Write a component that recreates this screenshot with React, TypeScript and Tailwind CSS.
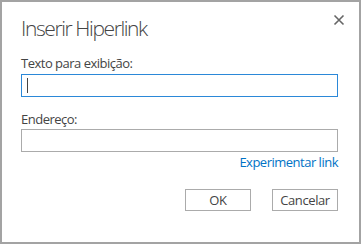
function Button({ label }: { label: string }) {
  return (
    <button
      type="button"
      className="flex h-[22px] w-[66px] items-center justify-center border border-[#ababab] bg-white text-[13px] leading-none tracking-[-0.4px] text-[#444]"
    >
      {label}
    </button>
  );
}

export default function App() {
  return (
    <div
      className="flex h-[244px] w-[361px] flex-col border-2 border-[#a3a3a3] bg-white text-[#444]"
      style={{ fontFamily: '"Open Sans", "Noto Sans", sans-serif' }}
    >
      <div className="flex items-start justify-between pl-[19px] pr-[14px] pt-[12px]">
        <h1 className="text-[21px] font-light leading-[28px] tracking-[-1.4px] text-[#444]">
          Inserir Hiperlink
        </h1>
        <button type="button" className="mt-[0px] text-[#666]" aria-label="Fechar">
          <svg width="12" height="12" viewBox="0 0 12 12">
            <path
              d="M1.5 1.5 L10.5 10.5 M10.5 1.5 L1.5 10.5"
              stroke="currentColor"
              strokeWidth="1.6"
            />
          </svg>
        </button>
      </div>

      <div className="flex flex-col pl-[19px] pr-[21px] pt-[13px]">
        <div className="text-[13px] leading-[17px] tracking-[-0.5px]">Texto para exibição:</div>
        <div className="mt-[2px] flex h-[23px] w-full items-center border border-[#2b88d8] px-[5px]">
          <div className="h-[15px] w-px bg-[#444]" />
        </div>

        <div className="mt-[14px] text-[13px] leading-[17px] tracking-[-0.5px]">Endereço:</div>
        <div className="mt-[1px] h-[23px] w-full border border-[#ababab]" />

        <div className="mt-[2px] flex justify-end">
          <a href="#" className="text-[13px] leading-[17px] tracking-[-0.5px] text-[#0072c6]">
            Experimentar link
          </a>
        </div>

        <div className="mt-[18px] flex justify-end gap-[21px]">
          <Button label="OK" />
          <Button label="Cancelar" />
        </div>
      </div>
    </div>
  );
}
